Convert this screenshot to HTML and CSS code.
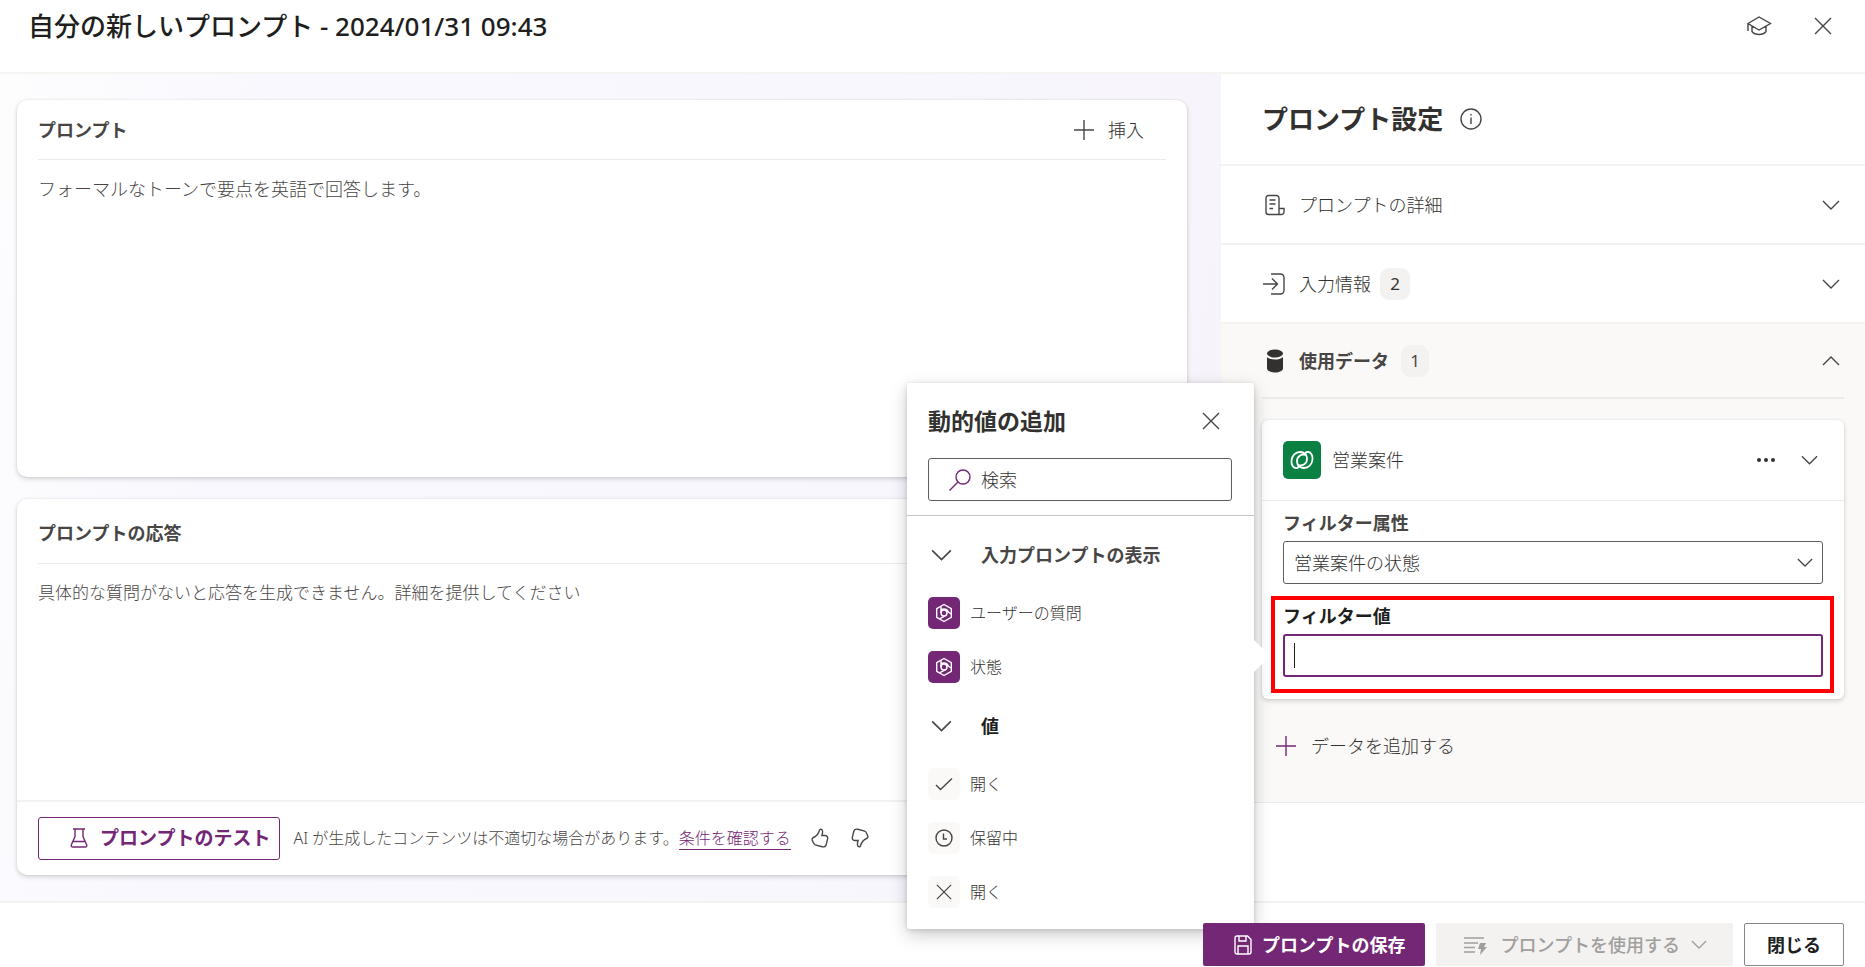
FILE: index.html
```html
<!DOCTYPE html>
<html lang="ja">
<head>
<meta charset="utf-8">
<meta name="viewport" content="width=device-width, initial-scale=1">
<title>自分の新しいプロンプト</title>
<link rel="stylesheet" href="styles.css">
</head>
<body>
<svg class="sprite" aria-hidden="true">
  <symbol id="chevron" viewBox="0 0 18 10"><path d="M1 1l8 8 8-8"/></symbol>
  <symbol id="close" viewBox="0 0 18 18"><path d="M1 1l16 16M17 1L1 17"/></symbol>
  <symbol id="plus" viewBox="0 0 20 20"><path d="M10 0v20M0 10h20"/></symbol>
  <symbol id="prompt-value" viewBox="0 0 20 20">
    <path d="M10 1.500L17.300 5.700v8.600L10 18.500 2.700 14.300V5.700z" stroke-linejoin="round"/>
    <circle cx="10" cy="10" r="3"/>
    <path d="M7 10V3.500M11.500 7.400L17.300 11M11.500 12.600L5.500 15.800M7 6.500c3-1 6-.5 7.500 2.500"/>
  </symbol>
</svg>

<header class="topbar">
  <h1 class="topbar-title">自分の新しいプロンプト - 2024/01/31 09:43</h1>
  <div class="topbar-actions">
    <button class="icon-button" type="button" aria-label="学習">
      <svg class="icon" width="26" height="20" viewBox="0 0 26 20"><path d="M2 7.500L13 1l11.500 6.500L13 14zM2 7.500V15M6 10v5.500c1.500 2 4 3 7 3s5.500-1 7-3V10"/></svg>
    </button>
    <button class="icon-button" type="button" aria-label="閉じる"><svg class="icon" width="18" height="18"><use href="#close"/></svg></button>
  </div>
</header>

<main class="main">
  <div class="workspace">
    <section class="card">
      <div class="card-head">
        <h2 class="card-title">プロンプト</h2>
        <button class="insert-button" type="button"><svg class="icon" width="20" height="20"><use href="#plus"/></svg>挿入</button>
      </div>
      <p class="card-text">フォーマルなトーンで要点を英語で回答します。</p>
    </section>

    <section class="card">
      <div class="card-head card-head-tall">
        <h2 class="card-title">プロンプトの応答</h2>
      </div>
      <p class="card-text card-text-small">具体的な質問がないと応答を生成できません。詳細を提供してください</p>
      <div class="card-foot">
        <button class="test-button" type="button">
          <svg class="icon" width="18" height="20" viewBox="0 0 18 20"><path d="M3 1h12M5 1v7.500L1.300 17c-.4 1.200.2 2 1.400 2h12.600c1.200 0 1.800-.8 1.400-2L13 8.500V1M3 13.500h12"/></svg>プロンプトのテスト
        </button>
        <p class="notice">AI が生成したコンテンツは不適切な場合があります。<a class="notice-link" href="#terms">条件を確認する</a></p>
        <button class="icon-button" type="button" aria-label="良い">
          <svg class="icon" width="18" height="20" viewBox="0 0 18 20"><path d="M8.500 2.200c.3-1.400 2.700-1.500 3 .8.200 1.500-.1 3-.6 4.500h2.800c2.300 0 3.300 1.300 2.900 3.400l-1.300 5.400c-.5 2-2 2.900-4 2.500l-7-1.900c-1.300-.4-1.600-1.300-2-2.400L1.200 12c-.3-1.200.1-2 1.300-2.500C5.300 8.300 7.500 5.500 8.500 2.200z"/></svg>
        </button>
        <button class="icon-button" type="button" aria-label="悪い">
          <svg class="icon flip" width="18" height="20" viewBox="0 0 18 20"><path d="M8.500 2.200c.3-1.400 2.700-1.500 3 .8.200 1.500-.1 3-.6 4.500h2.800c2.300 0 3.300 1.300 2.900 3.400l-1.300 5.400c-.5 2-2 2.900-4 2.500l-7-1.900c-1.300-.4-1.600-1.300-2-2.400L1.200 12c-.3-1.200.1-2 1.300-2.500C5.300 8.300 7.500 5.500 8.500 2.200z"/></svg>
        </button>
      </div>
    </section>
  </div>

  <aside class="settings">
    <div class="settings-head">
      <h2 class="settings-title">プロンプト設定</h2>
      <svg class="icon" width="22" height="22" viewBox="0 0 22 22"><circle cx="11" cy="11" r="10"/><path d="M11 9.500v6.500M11 6v1.500"/></svg>
    </div>
    <button class="row" type="button">
      <svg class="icon" width="22" height="22" viewBox="0 0 22 22"><path d="M16 14V4a2.500 2.500 0 0 0-2.500-2.500h-8A2.500 2.500 0 0 0 3 4v14a2.500 2.500 0 0 0 2.500 2.500h13a2.500 2.500 0 0 0 2.500-2.500v-3.500h-5v6M6.500 6h6M6.500 10h6M6.500 14.500h3.500"/></svg>
      プロンプトの詳細
      <svg class="icon row-chevron" width="18" height="10"><use href="#chevron"/></svg>
    </button>
    <button class="row" type="button">
      <svg class="icon" width="22" height="22" viewBox="0 0 22 22"><path d="M8 1h9.500A3.500 3.500 0 0 1 21 4.500v13a3.500 3.500 0 0 1-3.500 3.500H8M0 11h14M9 5.500l5.500 5.500L9 16.500"/></svg>
      入力情報<span class="badge">2</span>
      <svg class="icon row-chevron" width="18" height="10"><use href="#chevron"/></svg>
    </button>
    <section class="data">
      <button class="row row-open" type="button">
        <svg width="22" height="24" viewBox="0 0 22 24" fill="#323130"><ellipse cx="12" cy="4.500" rx="8" ry="4"/><path d="M4 8c2 2 5 2.600 8 2.600s6-.6 8-2.600v11.500c0 2.200-3.600 4-8 4s-8-1.800-8-4z"/></svg>
        使用データ<span class="badge badge-wide">1</span>
        <svg class="icon row-chevron flip-y" width="18" height="10"><use href="#chevron"/></svg>
      </button>
      <div class="data-card">
        <div class="data-card-head">
          <svg class="table-icon" width="38" height="38" viewBox="0 0 38 38"><rect width="38" height="38" rx="5" fill="#0b8043"/><g fill="none" stroke="#fff" stroke-width="1.800" stroke-linejoin="round"><path id="swirl" d="M14 27c-3.500.5-6-3-5.500-7.500C9 14.500 12.500 11 17 11c2.500 0 4.500 1 5.800 3-4.500-1.500-8.800 1.500-8.800 6 0 2 .5 3.500 1.500 5 .4.900-.2 1.800-1.500 2z"/><use href="#swirl" transform="rotate(180 19 19)"/></g></svg>
          <span class="data-name">営業案件</span>
          <button class="icon-button" type="button" aria-label="その他">
            <svg width="18" height="4" viewBox="0 0 18 4" fill="#323130"><circle cx="2" cy="2" r="2"/><circle cx="9" cy="2" r="2"/><circle cx="16" cy="2" r="2"/></svg>
          </button>
          <button class="icon-button" type="button" aria-label="折りたたむ"><svg class="icon" width="17" height="10"><use href="#chevron"/></svg></button>
        </div>
        <div class="field">
          <label class="field-label" for="attribute">フィルター属性</label>
          <div class="select-box">
            <select class="select" id="attribute"><option>営業案件の状態</option></select>
            <svg class="icon select-chevron" width="16" height="9"><use href="#chevron"/></svg>
          </div>
        </div>
        <div class="field field-marked">
          <label class="field-label field-label-dark" for="value">フィルター値</label>
          <input class="value-input" id="value" type="text">

          <div class="popup" role="dialog" aria-labelledby="popup-title">
            <div class="popup-head">
              <h3 class="popup-title" id="popup-title">動的値の追加</h3>
              <button class="icon-button" type="button" aria-label="閉じる"><svg class="icon" width="18" height="18"><use href="#close"/></svg></button>
            </div>
            <div class="search">
              <svg class="icon accent" width="22" height="22" viewBox="0 0 22 22"><circle cx="14" cy="8" r="7"/><path d="M9 13l-8.500 8.500"/></svg>
              <input class="search-input" type="search" placeholder="検索" aria-label="検索">
            </div>
            <div class="popup-body">
              <h4 class="group"><svg class="icon" width="21" height="12"><use href="#chevron"/></svg>入力プロンプトの表示</h4>
              <ul class="options">
                <li><button class="option" type="button"><span class="tile tile-accent"><svg class="icon" width="20" height="20"><use href="#prompt-value"/></svg></span>ユーザーの質問</button></li>
                <li><button class="option" type="button"><span class="tile tile-accent"><svg class="icon" width="20" height="20"><use href="#prompt-value"/></svg></span>状態</button></li>
              </ul>
              <h4 class="group group-dark"><svg class="icon" width="21" height="12"><use href="#chevron"/></svg>値</h4>
              <ul class="options">
                <li><button class="option" type="button"><span class="tile"><svg class="icon" width="18" height="14" viewBox="0 0 18 14"><path d="M1 8l4.500 4.500L17 1.500"/></svg></span>開く</button></li>
                <li><button class="option" type="button"><span class="tile"><svg class="icon" width="18" height="18" viewBox="0 0 18 18"><circle cx="9" cy="9" r="8"/><path d="M8.500 4.500V10H12"/></svg></span>保留中</button></li>
                <li><button class="option" type="button"><span class="tile"><svg class="icon" width="16" height="16"><use href="#close"/></svg></span>開く</button></li>
              </ul>
            </div>
          </div>
        </div>
      </div>
      <button class="add-button" type="button"><svg class="icon accent" width="20" height="20"><use href="#plus"/></svg>データを追加する</button>
    </section>
  </aside>
</main>

<footer class="footer">
  <button class="button button-primary" type="button">
    <svg class="icon" width="18" height="20" viewBox="0 0 18 20"><path d="M1 3a2 2 0 0 1 2-2h10.500L17 4.500V17a2 2 0 0 1-2 2H3a2 2 0 0 1-2-2zM5 1v5h7V1M4 19v-8h10v8"/></svg>プロンプトの保存
  </button>
  <button class="button button-disabled" type="button" disabled>
    <svg class="icon" width="24" height="20" viewBox="0 0 24 20"><path d="M0 3h20M0 8h14M0 12.500h11M0 17h11"/><path d="M16 8h6l-2 4h3l-7 8 1-6h-3z" fill="#a19f9d" stroke="none"/></svg>プロンプトを使用する<svg class="icon thin" width="16" height="9"><use href="#chevron"/></svg>
  </button>
  <button class="button button-outline" type="button">閉じる</button>
</footer>
</body>
</html>
```
FILE: styles.css
```css
* {
  box-sizing: border-box;
}

body {
  display: flex;
  flex-direction: column;
  min-height: 100vh;
  margin: 0;
  background: #fff;
  color: #323130;
  font: 300 18px/24px "Noto Sans", "Noto Sans CJK JP", sans-serif;
}

h1, h2, h3, h4, p, ul {
  margin: 0;
  padding: 0;
}

ul {
  list-style: none;
}

button, input, select {
  margin: 0;
  padding: 0;
  border: 0;
  background: none;
  color: inherit;
  font: inherit;
}

.sprite {
  position: absolute;
  width: 0;
  height: 0;
}

.icon {
  flex: none;
  fill: none;
  stroke: #484644;
  stroke-width: 1.4;
}

.accent {
  stroke: #742774;
}

.thin {
  stroke: #a19f9d;
}

.flip {
  transform: rotate(180deg);
}

.flip-y {
  transform: scaleY(-1);
}

.icon-button {
  display: flex;
  align-items: center;
  justify-content: center;
}

/* Header */

.topbar {
  display: flex;
  justify-content: space-between;
  height: 74px;
  padding: 9px 33px 0 28px;
  border-bottom: 2px solid #f5f4f3;
}

.topbar-title {
  color: #201f1e;
  font-size: 26px;
  line-height: 34px;
  font-weight: 500;
}

.topbar-actions {
  display: flex;
  align-items: center;
  gap: 42px;
  height: 34px;
}

/* Workspace */

.main {
  display: flex;
  flex: 1;
}

.workspace {
  display: flex;
  flex: 1;
  flex-direction: column;
  gap: 22px;
  padding: 26px 34px 26px 17px;
  background: linear-gradient(100deg, #fdfdfe, #f9f8fe 20%, #f8f7fd 70%, #f7f2fa);
}

.card {
  display: flex;
  flex: 1;
  flex-direction: column;
  border-radius: 10px;
  background: #fff;
  box-shadow: 0 2px 5px rgba(0, 0, 0, .16), 0 0 2px rgba(0, 0, 0, .1);
}

.card-head {
  display: flex;
  align-items: center;
  justify-content: space-between;
  height: 60px;
  margin: 0 21px;
  border-bottom: 1px solid #edebe9;
}

.card-head-tall {
  height: 65px;
  padding-top: 4px;
}

.card-title {
  color: #484644;
  font-size: 18px;
  font-weight: 600;
}

.insert-button {
  display: flex;
  align-items: center;
  gap: 14px;
  padding-right: 22px;
}

.card-text {
  flex: 1;
  padding: 17px 21px;
  color: #484644;
}

.card-text-small {
  font-size: 17px;
}

.card-foot {
  display: flex;
  align-items: center;
  height: 75px;
  padding: 0 21px 1px;
  border-top: 2px solid #f3f2f1;
}

.test-button {
  display: flex;
  align-items: center;
  gap: 12px;
  height: 43px;
  padding: 0 9px 0 31px;
  border: 1px solid #742774;
  border-radius: 3px;
  color: #742774;
  font-size: 19px;
  font-weight: 700;
}

.test-button .icon {
  stroke: #742774;
}

.notice {
  margin: 0 20px 0 13px;
  color: #484644;
  font-size: 16px;
}

.notice-link {
  border-bottom: 1px solid #742774;
  color: #742774;
  text-decoration: none;
}

.card-foot .icon-button + .icon-button {
  margin-left: 22px;
}

/* Settings panel */

.settings {
  flex: 0 0 644px;
}

.settings-head {
  display: flex;
  align-items: center;
  gap: 17px;
  height: 92px;
  padding-left: 41px;
  border-bottom: 2px solid #f3f2f1;
}

.settings-title {
  color: #323130;
  font-size: 26px;
  line-height: 36px;
  font-weight: 700;
}

.row {
  display: flex;
  align-items: center;
  width: 100%;
  height: 79px;
  padding: 0 25px 0 42px;
  border-bottom: 2px solid #f3f2f1;
  text-align: left;
}

.row > :first-child {
  margin-right: 14px;
}

.row-open {
  width: auto;
  min-width: calc(100% - 62px);
  height: 75px;
  margin: 0 21px 0 41px;
  padding: 0 4px 0 1px;
  border-bottom: 2px solid #edebe9;
  color: #484644;
  font-weight: 700;
}

.row-chevron {
  margin-left: auto;
}

.badge {
  min-width: 30px;
  height: 32px;
  margin-left: 9px;
  border-radius: 9px;
  background: #f3f2f1;
  font-size: 17px;
  line-height: 32px;
  font-weight: 400;
  text-align: center;
}

.badge-wide {
  min-width: 28px;
  margin-left: 12px;
}

.data {
  padding-bottom: 44px;
  border-bottom: 1px solid #edebe9;
  background: #faf9f8;
}

.data-card {
  margin: 21px 21px 0 41px;
  padding: 0 10px 6px 9px;
  border-radius: 6px;
  background: #fff;
  box-shadow: 0 2px 5px rgba(0, 0, 0, .16), 0 0 2px rgba(0, 0, 0, .1);
}

.data-card-head {
  display: flex;
  align-items: center;
  height: 81px;
  margin: 0 -10px 0 -9px;
  padding: 0 26px 0 21px;
  border-bottom: 1px solid #edebe9;
}

.data-name {
  flex: 1;
  margin-left: 11px;
}

.data-card-head .icon-button + .icon-button {
  margin-left: 26px;
}

.field {
  padding: 10px 11px 12px 12px;
}

.field-label {
  display: block;
  margin-bottom: 6px;
  color: #484644;
  font-weight: 600;
}

.field-label-dark {
  color: #201f1e;
}

.select-box {
  position: relative;
}

.select {
  width: 100%;
  height: 43px;
  padding: 0 40px 0 10px;
  border: 1px solid #605e5c;
  border-radius: 3px;
  appearance: none;
  background: #fff;
}

.select-chevron {
  position: absolute;
  top: 17px;
  right: 10px;
}

.field-marked {
  position: relative;
  padding: 4px 7px 12px 8px;
  border: 4px solid #f00;
}

.value-input {
  display: block;
  width: 100%;
  height: 43px;
  padding: 0 10px;
  border: 2px solid #742774;
  border-radius: 3px;
  background: linear-gradient(#201f1e, #201f1e) 9px center / 1px 25px no-repeat;
}

.add-button {
  display: flex;
  align-items: center;
  gap: 15px;
  margin: 35px 0 0 55px;
}

/* Dynamic value popup */

.popup {
  position: absolute;
  z-index: 2;
  right: calc(100% + 21px);
  bottom: -240px;
  width: 347px;
  padding-bottom: 21px;
  border-radius: 3px;
  background: #fff;
  box-shadow: 0 6px 18px rgba(0, 0, 0, .2), 0 1px 5px rgba(0, 0, 0, .14);
}

.popup::after {
  position: absolute;
  top: 257px;
  left: 100%;
  border: 16px solid transparent;
  border-left-color: #fff;
  border-right-width: 0;
  content: "";
}

.popup-head {
  display: flex;
  align-items: center;
  justify-content: space-between;
  height: 75px;
  padding: 0 34px 0 21px;
}

.popup-title {
  color: #323130;
  font-size: 23px;
  line-height: 32px;
  font-weight: 700;
}

.search {
  display: flex;
  align-items: center;
  gap: 10px;
  height: 43px;
  margin: 0 22px 14px 21px;
  padding-left: 20px;
  border: 1px solid #605e5c;
  border-radius: 3px;
}

.search-input {
  flex: 1;
  min-width: 0;
  height: 40px;
  outline: 0;
}

.search-input::placeholder {
  color: #323130;
  opacity: 1;
}

.popup-body {
  padding: 27px 21px 0;
  border-top: 1px solid #c8c6c4;
}

.group {
  display: flex;
  align-items: center;
  gap: 29px;
  padding-left: 3px;
  color: #484644;
  font-size: 18px;
  font-weight: 700;
}

.group-dark {
  margin-top: 31px;
  color: #201f1e;
}

.options {
  display: grid;
  gap: 22px;
  padding-top: 30px;
}

.option {
  display: flex;
  align-items: center;
  gap: 10px;
  font-size: 16px;
}

.tile {
  display: flex;
  align-items: center;
  justify-content: center;
  width: 32px;
  height: 32px;
  border-radius: 5px;
  background: #faf9f8;
}

.tile-accent {
  background: #742774;
}

.tile-accent .icon {
  stroke: #fff;
}

/* Footer */

.footer {
  display: flex;
  justify-content: flex-end;
  gap: 11px;
  height: 66px;
  padding: 20px 21px 0;
  border-top: 2px solid #f3f2f1;
}

.button {
  position: relative;
  z-index: 3;
  display: flex;
  align-items: center;
  height: 43px;
  border-radius: 2px;
  font-weight: 600;
}

.button-primary {
  gap: 10px;
  padding: 0 19px 0 31px;
  background: #742774;
  color: #fff;
}

.button-primary .icon {
  stroke: #fff;
}

.button-disabled {
  gap: 13px;
  padding: 0 26px 0 28px;
  background: #f3f2f1;
  color: #a19f9d;
  font-weight: 500;
}

.button-disabled .icon {
  stroke: #a19f9d;
}

.button-disabled .thin {
  margin-left: -2px;
}

.button-outline {
  padding: 0 22px;
  border: 1px solid #8a8886;
  color: #201f1e;
}
```
